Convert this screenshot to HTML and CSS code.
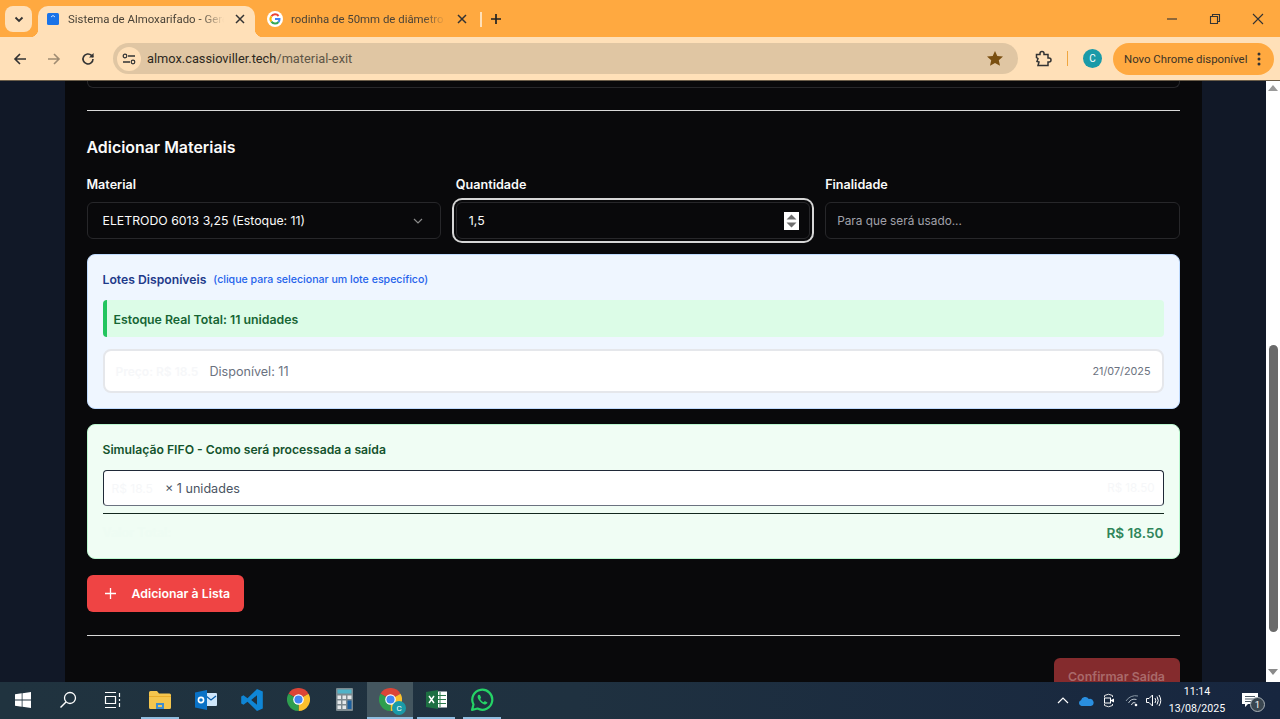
FILE: index.html
```html
<!DOCTYPE html>
<html lang="pt-BR">
<head>
    <meta charset="UTF-8">
    <title>Sistema de Almoxarifado</title>
    <link rel="stylesheet" href="styles.css">
</head>
<body>
    <svg class="defs" width="0" height="0">
        <symbol id="chrome" viewBox="-24 -24 48 48">
            <path fill="#db4437" d="M0 0L-20.8 -12A24 24 0 0 1 20.8 -12Z"/>
            <path fill="#fbc02d" d="M0 0L20.8 -12A24 24 0 0 1 0 24Z"/>
            <path fill="#2e9e4f" d="M0 0L0 24A24 24 0 0 1 -20.8 -12Z"/>
            <circle r="11" fill="#fff"/>
            <circle r="8.5" fill="#4285f4"/>
        </symbol>
    </svg>

    <!-- Tabs -->
    <header class="tabstrip">
        <button class="tab-search">
            <svg width="12" height="12" viewBox="0 0 12 12"><path d="M2.5 4.5L6 8l3.5-3.5" fill="none" stroke="#333" stroke-width="1.8"/></svg>
        </button>
        <div class="tab tab-active">
            <svg class="favicon" width="12" height="12" viewBox="0 0 12 12"><rect width="12" height="12" rx="1.5" fill="#1a73e8"/><path d="M4 4l2-1.5L8 4" fill="none" stroke="#cfe2ff" stroke-width="1"/></svg>
            <span class="tab-title">Sistema de Almoxarifado - Gerenciador</span>
            <svg class="tab-close" width="10" height="10" viewBox="0 0 10 10"><path d="M1 1l8 8M9 1l-8 8" stroke="#333" stroke-width="1.5"/></svg>
        </div>
        <div class="tab tab-other">
            <svg class="favicon" width="16" height="16" viewBox="0 0 16 16">
                <circle cx="8" cy="8" r="8" fill="#fff"/>
                <path d="M11.6 5A4.5 4.5 0 0 0 4.4 5.3" fill="none" stroke="#ea4335" stroke-width="2"/>
                <path d="M4.4 5.3A4.5 4.5 0 0 0 4.4 10.7" fill="none" stroke="#fbbc05" stroke-width="2"/>
                <path d="M4.4 10.7A4.5 4.5 0 0 0 11.5 11" fill="none" stroke="#34a853" stroke-width="2"/>
                <path d="M11.5 11A4.5 4.5 0 0 0 12.5 8H8" fill="none" stroke="#4285f4" stroke-width="2"/>
            </svg>
            <span class="tab-title">rodinha de 50mm de diâmetro - Pesquisa</span>
            <svg class="tab-close" width="10" height="10" viewBox="0 0 10 10"><path d="M1 1l8 8M9 1l-8 8" stroke="#333" stroke-width="1.5"/></svg>
        </div>
        <span class="tab-sep"></span>
        <svg class="tab-new" width="12" height="12" viewBox="0 0 12 12"><path d="M6 1v10M1 6h10" stroke="#222" stroke-width="1.7"/></svg>
        <div class="window-btns">
            <svg width="12" height="12" viewBox="0 0 12 12"><path d="M1 6h10" stroke="#333" stroke-width="1.1"/></svg>
            <svg width="12" height="12" viewBox="0 0 12 12"><path d="M1.5 3.5h7v7h-7zM3.5 3.5v-2h7v7h-2" fill="none" stroke="#333" stroke-width="1.1"/></svg>
            <svg width="12" height="12" viewBox="0 0 12 12"><path d="M1 1l10 10M11 1L1 11" stroke="#333" stroke-width="1.1"/></svg>
        </div>
    </header>

    <!-- Address bar -->
    <nav class="toolbar">
        <svg class="nav-btn" width="14" height="14" viewBox="0 0 14 14"><path d="M13 7H2M7 2L2 7l5 5" fill="none" stroke="#333" stroke-width="1.6"/></svg>
        <svg class="nav-btn" width="14" height="14" viewBox="0 0 14 14"><path d="M1 7h11M7 2l5 5-5 5" fill="none" stroke="#a08c72" stroke-width="1.6"/></svg>
        <svg class="nav-btn" width="14" height="14" viewBox="0 0 14 14"><path d="M12 7a5 5 0 1 1-1.5-3.6L12 5" fill="none" stroke="#333" stroke-width="1.6"/><path d="M12.6 1v4.6H8z" fill="#333"/></svg>
        <div class="omnibox">
            <span class="site-info">
                <svg width="14" height="12" viewBox="0 0 14 12"><path d="M6 3h7M1 9h7" stroke="#333" stroke-width="1.3"/><circle cx="3" cy="3" r="1.8" fill="none" stroke="#333" stroke-width="1.2"/><circle cx="11" cy="9" r="1.8" fill="none" stroke="#333" stroke-width="1.2"/></svg>
            </span>
            <span class="url">almox.cassioviller.tech<span class="url-path">/material-exit</span></span>
            <svg class="star" width="16" height="15" viewBox="0 0 16 15"><path d="M8 0l2.3 5 5.7.6-4.2 3.7 1.2 5.5L8 12l-5 2.8 1.2-5.5L0 5.6 5.7 5z" fill="#7a4f10"/></svg>
        </div>
        <svg class="ext" width="18" height="18" viewBox="0 0 18 18"><path d="M2.5 4.500h3.500v-1a2 2 0 0 1 4 0v1h4v3.500h1a2 2 0 0 1 0 4h-1v3.500h-10l1-3.500-2-.5 1-3-1.500-1z" fill="none" stroke="#333" stroke-width="1.5"/></svg>
        <span class="toolbar-sep"></span>
        <span class="avatar">C</span>
        <div class="update-pill">
            <span>Novo Chrome disponível</span>
            <svg width="4" height="14" viewBox="0 0 4 14"><circle cx="2" cy="2" r="1.5" fill="#333"/><circle cx="2" cy="7" r="1.5" fill="#333"/><circle cx="2" cy="12" r="1.5" fill="#333"/></svg>
        </div>
    </nav>

    <div class="viewport">
        <main class="page">
            <div class="card">
                <div class="prev-field"></div>
                <hr class="rule rule-first">

                <h2 class="section-title">Adicionar Materiais</h2>

                <div class="form-grid">
                    <div class="field">
                        <label class="field-label">Material</label>
                        <div class="control select-control">
                            <span>ELETRODO 6013 3,25 (Estoque: 11)</span>
                            <svg width="10" height="6" viewBox="0 0 10 6"><path d="M1 1l4 4 4-4" fill="none" stroke="#8a8a8a" stroke-width="1.2"/></svg>
                        </div>
                    </div>
                    <div class="field">
                        <label class="field-label">Quantidade</label>
                        <div class="control number-control">
                            <span>1,5</span>
                            <svg class="spinner" width="15" height="18" viewBox="0 0 15 18"><rect width="15" height="18" fill="#fff"/><path d="M7.5 2.500l5 5h-10zM7.5 15.500l5-5h-10z" fill="#6e6e6e"/></svg>
                        </div>
                    </div>
                    <div class="field">
                        <label class="field-label">Finalidade</label>
                        <div class="control text-control">Para que será usado...</div>
                    </div>
                </div>

                <section class="lots">
                    <div class="lots-head">
                        <span class="lots-title">Lotes Disponíveis</span>
                        <span class="lots-hint">(clique para selecionar um lote específico)</span>
                    </div>
                    <div class="stock-total">Estoque Real Total: 11 unidades</div>
                    <div class="lot-row">
                        <span class="ghost-text">Preço: R$ 18.5</span>
                        <span class="lot-qty">Disponível: 11</span>
                        <span class="lot-date">21/07/2025</span>
                    </div>
                </section>

                <section class="fifo">
                    <div class="fifo-title">Simulação FIFO - Como será processada a saída</div>
                    <div class="fifo-row">
                        <span class="ghost-text ghost-small">R$ 18.5</span>
                        <span class="fifo-qty">× 1 unidades</span>
                        <span class="ghost-text ghost-right">R$ 18.50</span>
                    </div>
                    <div class="fifo-total">
                        <span class="ghost-total">Valor Total:</span>
                        <span class="total-value">R$ 18.50</span>
                    </div>
                </section>

                <button class="add-btn">
                    <svg width="11" height="11" viewBox="0 0 11 11"><path d="M5.500 0v11M0 5.500h11" stroke="#fff" stroke-width="1.3"/></svg>
                    Adicionar à Lista
                </button>

                <hr class="rule rule-last">

                <div class="actions">
                    <button class="confirm-btn">Confirmar Saída</button>
                </div>
            </div>
        </main>
        <aside class="scrollbar">
            <svg width="10" height="6" viewBox="0 0 10 6"><path d="M5 0l5 6H0z" fill="#9a9a9a"/></svg>
            <div class="scroll-thumb"></div>
            <svg width="10" height="6" viewBox="0 0 10 6"><path d="M5 6L0 0h10z" fill="#8a8a8a"/></svg>
        </aside>
    </div>

    <!-- Windows taskbar -->
    <footer class="taskbar">
        <div class="task-slot slot-start">
            <svg width="16" height="16" viewBox="0 0 16 16"><path d="M0 2.3l6.700-1v6.300H0zM7.500 1.200L16 0v7.600H7.500zM0 8.400h6.700v6.300l-6.700-1zM7.500 8.400H16V16l-8.500-1.200z" fill="#fff"/></svg>
        </div>
        <div class="task-slot">
            <svg width="18" height="18" viewBox="0 0 18 18"><circle cx="11" cy="7" r="5.5" fill="none" stroke="#fff" stroke-width="1.3"/><path d="M7 11l-5.500 5.500" stroke="#fff" stroke-width="1.5"/></svg>
        </div>
        <div class="task-slot">
            <svg width="20" height="16" viewBox="0 0 20 16" class="icon-shift"><path d="M2 .5h11M2 15.500h11M2.500 4.500h10v7h-10zM16.500 1v4M16.500 7v2M16.500 11v4" fill="none" stroke="#fff" stroke-width="1.2"/></svg>
        </div>
        <div class="task-slot slot-open">
            <svg width="22" height="18" viewBox="0 0 22 18"><path d="M0 1.500A1.500 1.500 0 0 1 1.500 0H8l2 2.500h10.500A1.500 1.500 0 0 1 22 4v12.500a1.500 1.500 0 0 1-1.500 1.500h-19A1.500 1.500 0 0 1 0 16.500z" fill="#f4c64e"/><path d="M0 5h22v1H0z" fill="#e9ad2b"/><path d="M7 12h8v6H7z" fill="#3f8ed0"/><path d="M9 14h4v2H9z" fill="#f4c64e"/></svg>
        </div>
        <div class="task-slot">
            <svg width="22" height="20" viewBox="0 0 22 20"><rect x="8" y="3" width="14" height="13" rx="1" fill="#cfe6fa"/><path d="M11 6l5 4 5-4" fill="none" stroke="#0a5ea8" stroke-width="1.3"/><path d="M0 2.500L12 0v20L0 17.500z" fill="#0a72c6"/><circle cx="6" cy="10" r="2.600" fill="none" stroke="#fff" stroke-width="1.6"/></svg>
        </div>
        <div class="task-slot">
            <svg width="24" height="24" viewBox="0 0 24 24"><path fill-rule="evenodd" d="M17 1L7.500 10.300 3.500 7.300 1.200 8.500v7l2.300 1.200 4-3L17 23l5.800-2.500v-17zM17 7.200L11.200 12l5.800 4.800z" fill="#0f86d6"/></svg>
        </div>
        <div class="task-slot">
            <svg width="23" height="23"><use href="#chrome"/></svg>
        </div>
        <div class="task-slot">
            <svg width="17" height="23" viewBox="0 0 17 23">
                <rect width="17" height="23" rx="1" fill="#7d8a90"/>
                <rect x="1.5" y="1.5" width="14" height="4" fill="#4fb3c8"/>
                <path d="M1.500 7.500h3.500v3.500H1.500zM6.500 7.500H10v3.500H6.500zM1.500 12.500h3.500V16H1.500zM6.500 12.500H10V16H6.500zM1.500 17.500h3.500V21H1.500zM6.500 17.500H10V21H6.500zM11.500 7.500H15.500v3.500H11.500z" fill="#e4e8ea"/>
                <rect x="11.5" y="12.5" width="4" height="8.500" fill="#1b5f9e"/>
            </svg>
        </div>
        <div class="task-slot slot-active">
            <svg width="23" height="23"><use href="#chrome"/></svg>
            <span class="chrome-badge">C</span>
        </div>
        <div class="task-slot slot-open">
            <svg width="21" height="19" viewBox="0 0 21 19"><rect x="8" y="1.5" width="13" height="16" fill="#fff"/><path d="M14 2v15M10 5.500h10M10 9.500h10M10 13.500h10" stroke="#2d7a4c" stroke-width="1"/><path d="M0 2L12 0v19L0 17z" fill="#1d6f42"/><path d="M3 6l5 7M8 6l-5 7" stroke="#fff" stroke-width="1.5"/></svg>
        </div>
        <div class="task-slot slot-open">
            <svg width="24" height="24" viewBox="0 0 24 24"><path d="M2 22l1.500-5.500A10 10 0 1 1 7.500 20.500z" fill="none" stroke="#25d366" stroke-width="2.2" stroke-linejoin="round"/><path d="M8.500 6.800c-1.300 1.200-1.200 3 .2 5 1.500 2.200 3.500 4 5.800 4.600 1.500.3 2.700-.6 3-1.800l-2.700-1.500-1.200 1.200c-1.300-.6-2.600-1.900-3.400-3.300l1-1.200-1.200-2.900z" fill="#25d366"/></svg>
        </div>

        <div class="tray">
            <svg width="12" height="7" viewBox="0 0 12 7"><path d="M1 6l5-5 5 5" fill="none" stroke="#fff" stroke-width="1.2"/></svg>
            <svg class="tray-cloud" width="16" height="10" viewBox="0 0 16 10"><path d="M3.500 10A3 3 0 0 1 3 4.200 4.300 4.300 0 0 1 10.800 3 3.500 3.500 0 0 1 13 10z" fill="#2a8fe0"/></svg>
            <svg class="tray-meet" width="12" height="15" viewBox="0 0 12 15"><path d="M1.500 4V2.500q4-2.500 8 0V4M1.500 11v1.500q4 2.500 8 0V11" fill="none" stroke="#e6e6e6" stroke-width="1"/><rect x="1.5" y="5" width="6" height="5" fill="none" stroke="#fff" stroke-width="1"/><path d="M8 7l3-1.500v4L8 8z" fill="#fff"/></svg>
            <svg class="tray-wifi" width="14" height="13" viewBox="0 0 14 13"><path d="M1 7a11 11 0 0 1 12-5" fill="none" stroke="#8a99a6" stroke-width="1"/><path d="M3.500 9a7 7 0 0 1 8-3.500" fill="none" stroke="#b7c1ca" stroke-width="1"/><path d="M6.500 11a3 3 0 0 1 4-2" fill="none" stroke="#dfe4e8" stroke-width="1"/><circle cx="11" cy="11" r="1.3" fill="#fff"/></svg>
            <svg class="tray-sound" width="16" height="13" viewBox="0 0 16 13"><path d="M.5 4.500h2.500L6.500 1v11L3 8.500H.5z" fill="none" stroke="#fff" stroke-width="1"/><path d="M9 4q1.500 2.500 0 5M11 2.500q2.500 4 0 8M13 1q3.500 5.500 0 11" fill="none" stroke="#fff" stroke-width="1"/></svg>
            <div class="clock">
                <span>11:14</span>
                <span>13/08/2025</span>
            </div>
            <div class="notify">
                <svg width="16" height="15" viewBox="0 0 16 15"><path d="M0 0h16v11H6l-3 3v-3H0z" fill="#fff"/><path d="M3 3.500h10M3 6h10M3 8.500h6" stroke="#4c5a66" stroke-width="1"/></svg>
                <span class="notify-count">1</span>
            </div>
        </div>
    </footer>
</body>
</html>
```

FILE: styles.css
```css
* {
    box-sizing: border-box;
}

html, body {
    margin: 0;
    height: 719px;
    overflow: hidden;
}

body {
    font-family: 'Inter', sans-serif;
    background-color: #111827;
    display: flex;
    flex-direction: column;
}

button {
    font-family: inherit;
    border: none;
    padding: 0;
}

.defs {
    position: absolute;
}

/* Browser tabs */
.tabstrip {
    height: 37px;
    flex: none;
    background-color: #ffa940;
    display: flex;
    align-items: flex-end;
    font-family: 'Roboto', sans-serif;
    font-size: 11.4px;
    color: #4a4338;
}

.tab-search {
    width: 27px;
    height: 26px;
    margin: 0 6px 5px 5px;
    border-radius: 8px;
    background-color: #ffe0b8;
    display: flex;
    align-items: center;
    justify-content: center;
}

.tab {
    height: 31px;
    width: 217px;
    padding-bottom: 5px;
    display: flex;
    align-items: center;
    position: relative;
}

.tab-active {
    background-color: #ffe0b8;
    border-radius: 10px 10px 0 0;
    padding-left: 9px;
    padding-right: 10px;
}

.tab-active::before,
.tab-active::after {
    content: "";
    position: absolute;
    bottom: 0;
    width: 8px;
    height: 8px;
}

.tab-active::before {
    left: -8px;
    background: radial-gradient(circle at 0 0, #ffa940 8px, #ffe0b8 8.5px);
}

.tab-active::after {
    right: -8px;
    background: radial-gradient(circle at 100% 0, #ffa940 8px, #ffe0b8 8.5px);
}

.tab-other {
    width: 225px;
    padding-left: 12px;
    padding-right: 13px;
}

.favicon {
    flex: none;
}

.tab-title {
    flex: 1;
    white-space: nowrap;
    overflow: hidden;
    margin-left: 9px;
    -webkit-mask-image: linear-gradient(to right, #000 85%, transparent 100%);
    mask-image: linear-gradient(to right, #000 85%, transparent 100%);
}

.tab-other .tab-title {
    margin-left: 8px;
}

.tab-close {
    flex: none;
    margin-left: 11px;
}

.tab-sep {
    width: 2px;
    height: 15px;
    margin: 0 0 10px 0;
    background-color: #ffe0b8;
}

.tab-new {
    margin: 0 0 12px 8px;
}

.window-btns {
    margin-left: auto;
    width: 114px;
    padding-right: 16px;
    height: 100%;
    display: flex;
    align-items: center;
    justify-content: space-between;
}

/* Toolbar */
.toolbar {
    height: 44px;
    flex: none;
    background-color: #ffe0b8;
    display: flex;
    align-items: center;
    padding-left: 13px;
    border-bottom: 1px solid #6b5d49;
    font-family: 'Roboto', sans-serif;
}

.nav-btn {
    margin-right: 20px;
    flex: none;
}

.omnibox {
    width: 905px;
    height: 31px;
    margin-left: -2px;
    border-radius: 16px;
    background-color: #e0c6a3;
    display: flex;
    align-items: center;
    padding: 0 15px 0 4px;
}

.site-info {
    width: 24px;
    height: 24px;
    border-radius: 50%;
    background-color: #ffe0b8;
    display: flex;
    align-items: center;
    justify-content: center;
}

.url {
    margin-left: 6px;
    font-size: 12.8px;
    color: #2c2820;
}

.url-path {
    color: #5e5546;
}

.star {
    margin-left: auto;
}

.ext {
    margin-left: 16px;
}

.toolbar-sep {
    width: 1px;
    height: 15px;
    margin-left: 15px;
    background-color: #f0a63f;
}

.avatar {
    width: 19px;
    height: 19px;
    margin-left: 15px;
    border-radius: 50%;
    background-color: #1a9aa8;
    color: #fff;
    font-size: 10px;
    display: flex;
    align-items: center;
    justify-content: center;
}

.update-pill {
    width: 161px;
    height: 32px;
    margin-left: 11px;
    border-radius: 16px;
    background-color: #ffa940;
    color: #3b3326;
    font-size: 11.4px;
    display: flex;
    align-items: center;
    justify-content: space-between;
    padding: 0 13px 0 11px;
    white-space: nowrap;
}

/* Page area */
.viewport {
    flex: 1;
    min-height: 0;
    display: flex;
    overflow: hidden;
}

.page {
    flex: 1;
    overflow: hidden;
}

.card {
    width: 1137px;
    margin: 0 auto;
    height: 100%;
    padding: 0 22px;
    background-color: #09090b;
    color: #fafafa;
    overflow: hidden;
}

.prev-field {
    height: 7px;
    border: 1px solid #27272a;
    border-top: none;
    border-radius: 0 0 6px 6px;
}

.rule {
    border: none;
    height: 1px;
    margin: 0;
    background-color: #d9d9d9;
}

.rule-first {
    margin-top: 22px;
}

.rule-last {
    margin-top: 23px;
}

.section-title {
    margin: 27px 0 0;
    font-size: 15.9px;
    line-height: 20px;
    font-weight: 600;
}

.form-grid {
    display: grid;
    grid-template-columns: repeat(3, 1fr);
    gap: 15px;
    margin-top: 19px;
}

.field-label {
    display: block;
    font-size: 12.6px;
    line-height: 16px;
    font-weight: 600;
}

.control {
    height: 37px;
    margin-top: 9px;
    border: 1px solid #27272a;
    border-radius: 6px;
    background-color: #09090b;
    display: flex;
    align-items: center;
    font-size: 12.3px;
}

.select-control {
    justify-content: space-between;
    padding: 0 17px 0 15px;
}

.number-control {
    justify-content: space-between;
    padding: 0 10px 0 12px;
    box-shadow: 0 0 0 2px #09090b, 0 0 0 4px #d6d6d6;
}

.text-control {
    padding: 0 11px;
    font-size: 11.8px;
    color: #a1a1aa;
}

/* Lots panel */
.lots {
    margin-top: 15px;
    padding: 15px;
    height: 155px;
    border: 1px solid #bfdbfe;
    border-radius: 8px;
    background-color: #eff6ff;
}

.lots-head {
    height: 18px;
    display: flex;
    align-items: center;
    gap: 7px;
}

.lots-title {
    font-size: 12.2px;
    font-weight: 600;
    color: #1e3a8a;
}

.lots-hint {
    font-size: 10.6px;
    font-weight: 500;
    color: #2563eb;
}

.stock-total {
    height: 37px;
    margin-top: 12px;
    padding: 1px 0 0 7px;
    border-left: 4px solid #22c55e;
    border-radius: 4px;
    background-color: #dcfce7;
    color: #166534;
    font-size: 12.3px;
    font-weight: 600;
    display: flex;
    align-items: center;
}

.lot-row {
    height: 44px;
    margin-top: 12px;
    padding: 0 11px;
    border: 2px solid #e5e7eb;
    border-radius: 8px;
    background-color: #fff;
    display: flex;
    align-items: center;
    font-size: 12.6px;
}

.ghost-text {
    color: #f6f7f9;
    font-size: 12px;
    font-weight: 600;
}

.lot-qty {
    margin-left: 11px;
    color: #6b7280;
}

.lot-date {
    margin-left: auto;
    font-size: 10.8px;
    color: #6b7280;
}

/* FIFO panel */
.fifo {
    height: 135px;
    margin-top: 15px;
    padding: 16px 15px 15px;
    border: 1px solid #bbf7d0;
    border-radius: 8px;
    background-color: #f0fdf4;
}

.fifo-title {
    line-height: 18px;
    font-size: 12.2px;
    font-weight: 600;
    color: #14532d;
}

.fifo-row {
    height: 36px;
    margin-top: 11px;
    padding: 0 8px;
    border: 1px solid #1f2937;
    border-bottom-color: #6b7280;
    border-radius: 4px;
    background-color: #fff;
    display: flex;
    align-items: center;
    font-size: 12.6px;
}

.ghost-small {
    font-size: 12px;
    font-weight: 400;
}

.fifo-qty {
    margin-left: 12px;
    color: #4b5563;
}

.ghost-right {
    margin-left: auto;
    font-size: 11.6px;
    font-weight: 400;
}

.fifo-total {
    margin-top: 7px;
    padding-top: 9px;
    border-top: 1px solid #14281f;
    display: flex;
    justify-content: space-between;
    align-items: center;
    line-height: 20px;
}

.ghost-total {
    color: #eefcf3;
    font-size: 12.6px;
    font-weight: 600;
}

.total-value {
    color: #2f855a;
    font-size: 13.6px;
    font-weight: 600;
}

.add-btn {
    width: 157px;
    height: 37px;
    margin-top: 16px;
    border-radius: 6px;
    background-color: #ef4444;
    color: #fff;
    font-size: 12.3px;
    font-weight: 600;
    display: flex;
    align-items: center;
    gap: 16px;
    padding-left: 18px;
}

.actions {
    margin-top: 22px;
    display: flex;
    justify-content: flex-end;
}

.confirm-btn {
    width: 126px;
    height: 37px;
    border-radius: 6px;
    background-color: #842b2d;
    color: #a9696a;
    font-size: 12.4px;
    font-weight: 600;
}

/* Scrollbar */
.scrollbar {
    width: 14px;
    flex: none;
    background-color: #fff;
    display: flex;
    flex-direction: column;
    align-items: center;
    padding: 4px 0 7px;
}

.scroll-thumb {
    width: 9px;
    height: 287px;
    margin-top: 254px;
    margin-bottom: auto;
    border-radius: 5px;
    background-color: #6a6a6a;
}

/* Taskbar */
.taskbar {
    height: 37px;
    flex: none;
    display: flex;
    align-items: stretch;
    background: linear-gradient(to right, #20333f 0%, #1f3140 45%, #17263f 100%);
    color: #fff;
    font-family: 'Roboto', sans-serif;
}

.task-slot {
    width: 46px;
    display: flex;
    align-items: center;
    justify-content: center;
    position: relative;
    border-bottom: 2px solid transparent;
}

.slot-start {
    width: 45px;
}

.icon-shift {
    margin-right: 3px;
}

.slot-open::after {
    content: "";
    position: absolute;
    left: 4px;
    right: 4px;
    bottom: -2px;
    height: 2px;
    background-color: #8fbde0;
}

.slot-active {
    background-color: #44565f;
    border-bottom-color: #8fbde0;
}

.chrome-badge {
    position: absolute;
    left: 25px;
    top: 19px;
    width: 14px;
    height: 14px;
    border-radius: 50%;
    background-color: #1a9aa8;
    font-size: 8px;
    display: flex;
    align-items: center;
    justify-content: center;
}

.tray {
    margin-left: auto;
    display: flex;
    align-items: center;
}

.tray-cloud {
    margin-left: 9px;
}

.tray-meet {
    margin-left: 9px;
}

.tray-wifi {
    margin-left: 10px;
}

.tray-sound {
    margin-left: 7px;
}

.clock {
    width: 60px;
    margin-left: 5px;
    padding-bottom: 2px;
    display: flex;
    flex-direction: column;
    align-items: center;
    font-size: 10.6px;
    line-height: 17px;
}

.notify {
    width: 38px;
    height: 100%;
    margin-left: 15px;
    display: flex;
    align-items: center;
    position: relative;
}

.notify-count {
    position: absolute;
    left: 8px;
    top: 15px;
    width: 15px;
    height: 15px;
    border-radius: 50%;
    border: 1px solid #aab2b8;
    background-color: #3a4650;
    font-size: 9.5px;
    display: flex;
    align-items: center;
    justify-content: center;
}
```
